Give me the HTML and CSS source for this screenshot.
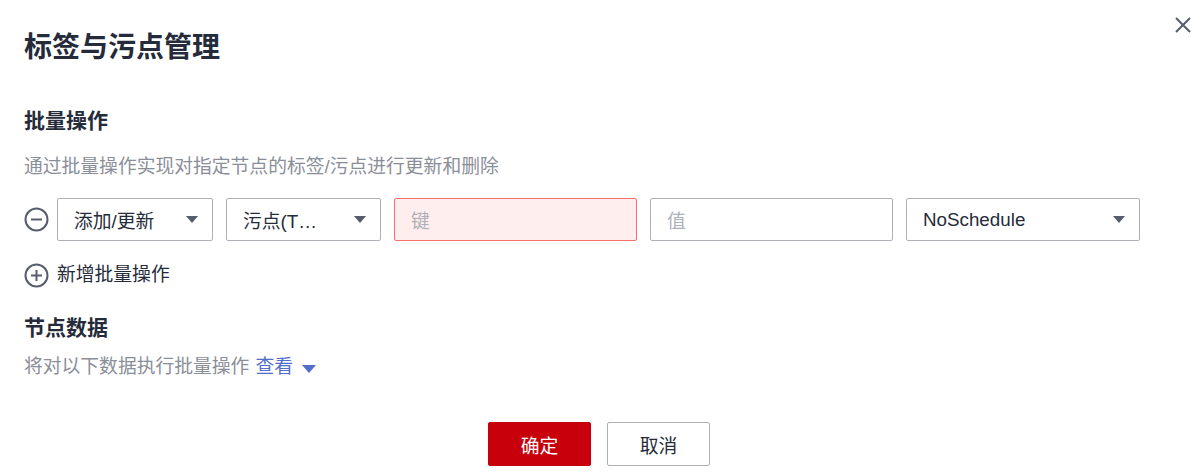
FILE: index.html
```html
<!DOCTYPE html>
<html lang="zh-CN">
<head>
    <meta charset="UTF-8">
    <meta name="viewport" content="width=device-width, initial-scale=1.0">
    <title>标签与污点管理</title>
    <link rel="stylesheet" href="styles.css">
</head>
<body>

    <div class="dialog">
        <!-- 关闭 -->
        <span class="close">
            <svg width="16" height="16" viewBox="0 0 16 16">
                <path d="M1 1L15 15M15 1L1 15" stroke="#575d6c" stroke-width="2" fill="none"/>
            </svg>
        </span>

        <h1 class="title">标签与污点管理</h1>

        <!-- 批量操作 -->
        <h2 class="section">批量操作</h2>
        <p class="desc">通过批量操作实现对指定节点的标签/污点进行更新和删除</p>

        <div class="row">
            <span class="icon">
                <svg width="25" height="25" viewBox="0 0 25 25">
                    <circle cx="12.5" cy="12.5" r="11" stroke="#575d6c" stroke-width="2" fill="none"/>
                    <path d="M7 12.5H18" stroke="#575d6c" stroke-width="2"/>
                </svg>
            </span>
            <div class="select w-op">
                <span class="label">添加/更新</span>
                <i class="caret"></i>
            </div>
            <div class="select w-type" title="污点(Taint)">
                <span class="label">污点(T…</span>
                <i class="caret"></i>
            </div>
            <div class="input error w-kv">键</div>
            <div class="input w-kv">值</div>
            <div class="select w-effect">
                <span class="label">NoSchedule</span>
                <i class="caret"></i>
            </div>
        </div>

        <div class="add">
            <span class="icon">
                <svg width="25" height="25" viewBox="0 0 25 25">
                    <circle cx="12.5" cy="12.5" r="11" stroke="#575d6c" stroke-width="2" fill="none"/>
                    <path d="M7 12.5H18M12.5 7V18" stroke="#575d6c" stroke-width="2"/>
                </svg>
            </span>
            <span>新增批量操作</span>
        </div>

        <!-- 节点数据 -->
        <h2 class="section section-node">节点数据</h2>
        <p class="desc desc-node">将对以下数据执行批量操作 <a class="link">查看</a><i class="link-caret"></i></p>

        <div class="footer">
            <button class="btn primary">确定</button>
            <button class="btn">取消</button>
        </div>
    </div>

</body>
</html>
```

FILE: styles.css
```css
body {
    margin: 0;
    background: #fff;
    font-family: "Liberation Sans", "Noto Sans CJK SC", sans-serif;
    color: #252b3a;
}

.dialog {
    position: relative;
    padding: 28px 24px 0 24px;
}

.close {
    position: absolute;
    top: 17px;
    right: 12px;
    width: 16px;
    height: 16px;
    cursor: pointer;
}
.close svg {
    display: block;
}

.title {
    margin: 0;
    font-size: 28px;
    line-height: 40px;
    font-weight: bold;
    color: #252b3a;
}

.section {
    margin: 38px 0 0 0;
    font-size: 21px;
    line-height: 30px;
    font-weight: bold;
    color: #252b3a;
}
.section-node {
    margin-top: 24px;
}

.desc {
    margin: 17px 0 0 0;
    font-size: 18.8px;
    line-height: 28px;
    color: #8a8e99;
}
.desc-node {
    margin-top: 10px;
    display: flex;
    align-items: center;
}

.link {
    color: #526ecc;
    margin-left: 6px;
    cursor: pointer;
}
.link-caret {
    display: inline-block;
    margin-left: 9px;
    margin-top: 3px;
    border-left: 7.5px solid transparent;
    border-right: 7.5px solid transparent;
    border-top: 8px solid #526ecc;
}

.row {
    display: flex;
    align-items: center;
    gap: 13px;
    margin-top: 17px;
}
.row .icon {
    margin-right: -5px;
}
.icon {
    display: flex;
    width: 25px;
    height: 25px;
}

.select,
.input {
    box-sizing: border-box;
    height: 43px;
    border: 1px solid #adb0b8;
    border-radius: 2px;
    display: flex;
    align-items: center;
    font-size: 18.8px;
    padding: 0 14px 0 16px;
}
.select {
    justify-content: space-between;
    color: #252b3a;
}
.label {
    white-space: nowrap;
}
.caret {
    display: inline-block;
    border-left: 6px solid transparent;
    border-right: 6px solid transparent;
    border-top: 7px solid #575d6c;
}
.input {
    color: #adb0b8;
}
.error {
    border-color: #f66f6a;
    background: #ffeeed;
}

.w-op {
    width: 156px;
}
.w-type {
    width: 155px;
}
.w-kv {
    width: 243px;
}
.w-effect {
    width: 234px;
}

.add {
    display: flex;
    align-items: center;
    gap: 8px;
    margin-top: 20px;
    font-size: 18.8px;
    line-height: 28px;
    color: #252b3a;
    cursor: pointer;
}

.footer {
    display: flex;
    justify-content: center;
    gap: 16px;
    margin-top: 41px;
    padding-right: 5px;
}
.btn {
    box-sizing: border-box;
    width: 103px;
    height: 44px;
    border: 1px solid #adb0b8;
    border-radius: 2px;
    background: #fff;
    color: #252b3a;
    font-family: "Liberation Sans", "Noto Sans CJK SC", sans-serif;
    font-size: 18.8px;
    cursor: pointer;
}
.primary {
    background: #c7000b;
    border-color: #c7000b;
    color: #fff;
}
```
